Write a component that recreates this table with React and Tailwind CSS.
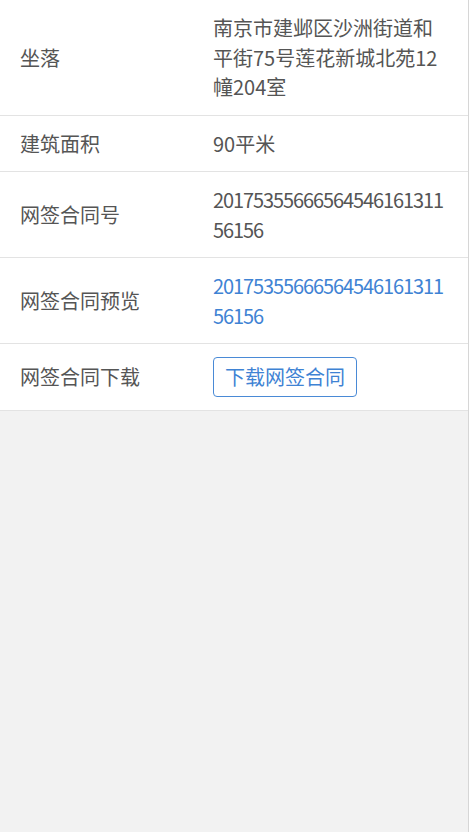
import React from "react";

const contractNo = "2017535566656454616131156156";

// long contract number: allow one break point where the column runs out
const splitNo = (no) => (
  <span className="tracking-[-1.1px]">
    {no.slice(0, 23)}
    <wbr />
    {no.slice(23)}
  </span>
);

const rows = [
  { label: "坐落", value: "南京市建邺区沙洲街道和平街75号莲花新城北苑12幢204室" },
  { label: "建筑面积", value: "90平米" },
  { label: "网签合同号", value: splitNo(contractNo) },
  { label: "网签合同预览", value: splitNo(contractNo), link: true },
  { label: "网签合同下载", button: "下载网签合同" },
];

export default function App() {
  return (
    <div
      className="flex min-h-[832px] w-full text-[20px] leading-[29.5px] text-[#555]"
      style={{ fontFamily: '"Noto Sans CJK SC", "Noto Sans", sans-serif' }}
    >
      <div className="w-[468px] bg-[#f2f2f2]">
        <div className="bg-white">
          {rows.map((row) => (
            <div key={row.label} className="flex items-center border-b border-[#e3e3e3] py-[13px]">
              <div className="w-[213px] shrink-0 pl-5">{row.label}</div>
              <div className="w-[236px]">
                {row.button ? (
                  <button className="h-10 rounded border border-[#4a8ad6] px-[11px] text-[#3f83d4]">
                    {row.button}
                  </button>
                ) : (
                  <span className={row.link ? "text-[#3f83d4]" : ""}>{row.value}</span>
                )}
              </div>
            </div>
          ))}
        </div>
      </div>
      <div className="w-px bg-[#d6d6d6]" />
      <div className="flex-1 bg-white" />
    </div>
  );
}
